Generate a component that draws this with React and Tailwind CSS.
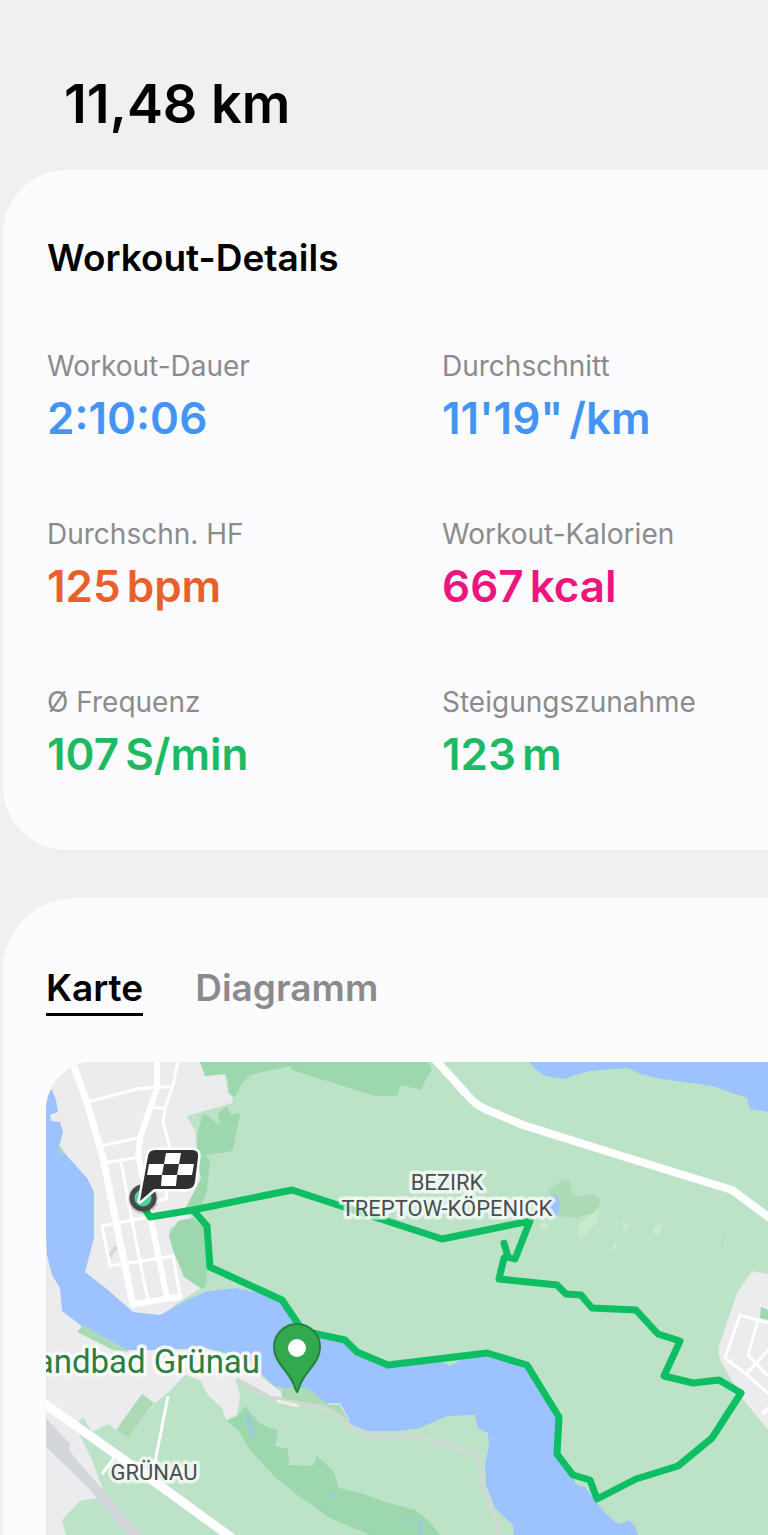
const stats = [
  { label: "Workout-Dauer", value: "2:10:06", color: "text-[#4495f3]" },
  { label: "Durchschnitt", value: "11'19\"", unit: "/km", color: "text-[#4495f3]" },
  { label: "Durchschn. HF", value: "125", unit: "bpm", color: "text-[#ea602d]" },
  { label: "Workout-Kalorien", value: "667", unit: "kcal", color: "text-[#f0147f]" },
  { label: "Ø Frequenz", value: "107", unit: "S/min", color: "text-[#1dba63]" },
  { label: "Steigungszunahme", value: "123", unit: "m", color: "text-[#1dba63]" },
];

function Stat({ label, value, unit, color }) {
  return (
    <div>
      <dt className="text-[28px] leading-10 text-[#8b8b8d]">{label}</dt>
      <dd className={`flex gap-1.5 text-[44px] font-semibold leading-16 ${color}`}>
        <span>{value}</span>
        {unit && <span>{unit}</span>}
      </dd>
    </div>
  );
}

function RouteMap() {
  return (
    <svg
      className="block h-[473px] w-full rounded-tl-[48px]"
      viewBox="46 1062 722 473"
      preserveAspectRatio="xMinYMin slice"
      role="img"
      aria-label="Karte"
    >
      <rect x="46" y="1062" width="722" height="473" fill="#bce3c7" />

      {/* built-up areas */}
      <g fill="#ecebee">
        <path d="M46 1062H200L206 1076L225 1074L228 1094L233 1097L232 1103L187 1116L195 1131L197 1155L201 1180L184 1210L192 1218L170 1228L169 1236L173 1250L185 1277L201 1288L172 1307L160 1320H46Z" />
        <path d="M46 1260L62 1305L126 1345L200 1345L245 1364L281 1392L282 1402L270 1399L235 1378L240 1395L237 1415L226 1420L222 1408L208 1395L200 1380L185 1375L172 1389L155 1403L127 1438L108 1424L92 1432L83 1417L75 1425L92 1460L103 1490L103 1497L80 1501L62 1520L66 1535H46Z" />
        <path d="M768 1274L752 1271L737 1293L719 1346Q717 1358 725 1368L742 1398L768 1430Z" />
      </g>

      {/* woods */}
      <g fill="#9cd7ad">
        <path d="M200 1062L205 1076L225 1074L228 1080L229 1092L234 1098L242 1084L250 1075L290 1066L292 1070L330 1082L375 1096H397L401 1085L421 1090L426 1079L432 1070L428 1062Z" />
        <path d="M198 1131L203 1114L208 1116L219 1125L217 1114L227 1106L231 1115L240 1113L233 1150L228 1152L205 1155L210 1160L207 1190L200 1210H185L190 1200L201 1178L197 1155Z" />
        <path d="M169 1235L178 1221L192 1218L206 1228L208 1265L206 1285L202 1289L184 1277L173 1250Z" />
        <path d="M227 1421L236 1417L245 1406L258 1422L267 1427L278 1430L275 1446L288 1449L289 1465L313 1466L317 1456L334 1472L339 1488L360 1493L385 1502L415 1510L430 1522L440 1535H370L330 1518L300 1497L275 1477L250 1450L238 1430Z" />
        <path d="M761 1307L768 1310V1320L760 1318Z" />
      </g>
      <path d="M213 1113L220 1125L218 1114Z" fill="#bce3c7" />
      <g fill="#abdab4">
        <path d="M142 1394L154 1403L128 1438L116 1430Z" />
        <path d="M548 1190L563 1180L570 1181L572 1193L580 1197L592 1194L601 1199L599 1206L593 1213L577 1218L558 1216Z" />
      </g>

      {/* water */}
      <g fill="#9cc2ff">
        <path d="M46 1090H52L56 1100L58 1112L50 1115L51 1121L60 1122L63 1132L59 1147L87 1178L94 1192V1238L85 1272L108 1290L133 1312L160 1315L185 1301L205 1292L235 1288L265 1294L283 1301L303 1331L345 1340L357 1352L370 1360L388 1365L440 1361L450 1366L462 1359L487 1353L527 1365L557 1415L556 1455L572 1476L577 1485L585 1487L597 1503L605 1513L615 1522L622 1524L629 1520L635 1526L638 1535H514L513 1525L495 1508L486 1485L485 1465L489 1445L488 1433L478 1428L475 1415L447 1416L420 1428L400 1431L367 1431L350 1424L340 1405L325 1403L312 1392L305 1389L285 1388L274 1386L255 1368L240 1356L205 1348L160 1350L126 1350L105 1338L83 1327L62 1311L60 1288L52 1275L47 1255L46 1235Z" />
        <path d="M529 1062L535 1069L545 1076L563 1079L590 1071L628 1068L640 1074L662 1079L712 1086L747 1098L750 1109L768 1112V1062Z" />
        <ellipse cx="554" cy="1206" rx="6" ry="11" />
      </g>
      <path d="M83 1325L77 1332L113 1350L130 1352L108 1340Z" fill="#abdab4" />
      <path d="M60 1146L58 1151L66 1155Z" fill="#abdab4" />
      <path d="M282 1388L308 1388L325 1403L340 1405L350 1423L332 1411L282 1400Z" fill="#abdab4" />
      <path d="M572 1476L577 1485L585 1487L592 1484L588 1480Z" fill="#bce3c7" />
      <g fill="#9cc8e0">
        <path d="M244 1413L250 1417L256 1438L252 1437Z" />
        <path d="M328 1494L336 1493L333 1498Z" />
        <path d="M403 1516L411 1519L408 1523Z" />
        <path d="M419 1520L423 1522L422 1535L418 1533Z" />
      </g>
      <g fill="#c9e9ce">
        <path d="M599 1210L597 1222L580 1241L578 1227L586 1218Z" />
        <path d="M621 1220L631 1226L624 1231Z" />
        <path d="M664 1221L657 1237L651 1230L656 1226Z" />
        <path d="M618 1237L616 1248L609 1252L613 1246Z" />
        <path d="M544 1220L550 1229L538 1229Z" />
      </g>
      <path d="M725 1232L723 1247L721 1241Z" fill="#acdcc4" />

      {/* railway and forest track */}
      <path d="M46 1418L70 1444L69 1450L80 1464L105 1492L141 1535H128L90 1490L70 1470L46 1447Z" fill="#d3d7db" />
      <path d="M109 1257L116 1247" stroke="#d3d7db" strokeWidth="4" />
      <path d="M237 1380L270 1398L300 1404Q325 1405 340 1417Q352 1430 367 1435L395 1437L425 1438L450 1446L473 1453Q480 1460 482 1480Q485 1495 492 1510L500 1535" fill="none" stroke="#cddad2" strokeWidth="5" />
      <path d="M277 1401L299 1406" stroke="#f6ede0" strokeWidth="3" />
      <path d="M329 1404H340L349 1420" fill="none" stroke="#f2f3e8" strokeWidth="1" />

      {/* streets */}
      <g fill="none" stroke="#fff">
        <path d="M432 1056L470 1098Q476 1105 485 1109L523 1125L625 1157L732 1190L775 1222" strokeWidth="8" />
        <path d="M42 1402L100 1443L155 1482L232 1538" strokeWidth="9" />
        <path d="M70 1056L87 1102L103 1158L133 1305" strokeWidth="7" />
        <path d="M157 1060V1088L140 1138L138 1155L148 1205L167 1298" strokeWidth="6" />
        <path d="M131 1305L182 1296" strokeWidth="6" />
        <g strokeWidth="3">
          <path d="M178 1062L173 1085L165 1108L163 1122L170 1148" />
          <path d="M88 1102L137 1089L158 1087H173M153 1107L165 1109" />
          <path d="M101 1146L138 1138M103 1163L141 1157" />
          <path d="M121 1162L131 1215L140 1262L148 1300" />
          <path d="M102 1226L110 1266L173 1256L180 1296M102 1226L148 1217" />
          <path d="M163 1165L167 1200M150 1203L165 1199" />
          <path d="M168 1396L155 1462M114 1458L102 1474" />
          <path d="M768 1323L740 1315L725 1358L746 1374L770 1395M758 1320L748 1355L770 1378M746 1374L770 1348" />
        </g>
        <circle cx="132" cy="1220" r="3" fill="#fff" stroke="none" />
        <circle cx="140" cy="1261" r="3" fill="#fff" stroke="none" />
        <path d="M762 1414L770 1407" strokeWidth="4" />
      </g>

      {/* route */}
      <path
        d="M145 1209L150 1217L193 1210L292 1190L442 1239L530 1221L515 1259L508 1257L504 1243L508 1257L504 1258L499 1279L557 1285L566 1294L581 1295L592 1308L636 1310L658 1334L680 1341L664 1376L693 1383L719 1380L741 1393L712 1438L678 1466L636 1479L597 1499L590 1480L573 1475L557 1454L559 1417L527 1365L487 1353L388 1365L357 1352L345 1340L303 1331L282 1300L210 1267L207 1226L193 1210"
        fill="none"
        stroke="#0dbf62"
        strokeWidth="7"
        strokeLinejoin="round"
        strokeLinecap="round"
      />

      {/* start and finish */}
      <circle cx="143" cy="1199" r="15" fill="#000" opacity="0.15" />
      <circle cx="143" cy="1198" r="11" fill="#4fd394" stroke="#45494a" strokeWidth="5" />
      <path
        d="M155 1150H192Q199 1150 198 1157L195 1182Q194 1189 187 1189H154L140 1201L148 1156Q149 1150 155 1150Z"
        fill="#303030"
        stroke="#fff"
        strokeWidth="5"
        strokeLinejoin="round"
        paintOrder="stroke"
      />
      <g fill="#fff">
        <path d="M166 1153H181L179 1164H164Z" />
        <path d="M149 1164H164L162 1175H147Z" />
        <path d="M179 1164H194L192 1175H177Z" />
        <path d="M162 1175H177L176 1186H161Z" />
      </g>

      {/* place pin */}
      <path
        d="M297 1392L295 1388C291 1372 274 1364 274 1347A23 23 0 0 1 320 1347C320 1364 303 1372 299 1388Z"
        fill="#34a84f"
        stroke="#23823c"
        strokeWidth="2"
        strokeLinejoin="round"
      />
      <circle cx="297" cy="1348" r="9" fill="#fff" />

      <g
        fontFamily="Roboto, sans-serif"
        stroke="#fff"
        strokeOpacity="0.7"
        strokeWidth="7"
        strokeLinejoin="round"
        paintOrder="stroke"
        fill="#4a4e52"
        fontSize="22"
      >
        <text x="447" y="1190" textAnchor="middle">BEZIRK</text>
        <text x="447" y="1216" textAnchor="middle">TREPTOW-KÖPENICK</text>
        <text x="154" y="1480" textAnchor="middle">GRÜNAU</text>
        <text x="260" y="1373" textAnchor="end" fontSize="33" fill="#2b7f41" strokeOpacity="0.85">
          andbad Grünau
        </text>
      </g>
    </svg>
  );
}

export default function App() {
  return (
    <main className="min-h-screen bg-[#f0f0f2] font-['Inter',sans-serif] text-black">
      <h1 className="px-16 pt-16 pb-[26px] text-[54px] font-semibold leading-20">11,48 km</h1>

      <div className="flex flex-col gap-12 pl-[3px]">
        <section className="rounded-l-[64px] bg-[#fcfcfe] pt-16 pb-16 pl-11">
          <h2 className="text-[37px] font-semibold leading-12">Workout-Details</h2>
          <dl className="mt-16 grid grid-cols-[395fr_326fr] gap-y-16">
            {stats.map((stat) => (
              <Stat key={stat.label} {...stat} />
            ))}
          </dl>
        </section>

        <section className="rounded-tl-[72px] bg-[#fcfcfe] pt-16 pl-[43px]">
          <div role="tablist" className="flex gap-[52px] text-[37px] font-semibold leading-[51px]">
            <button type="button" role="tab" aria-selected="true" className="border-b-3 border-black">
              Karte
            </button>
            <button
              type="button"
              role="tab"
              aria-selected="false"
              className="border-b-3 border-transparent text-[#8b8b8d]"
            >
              Diagramm
            </button>
          </div>
          <div className="mt-[46px]">
            <RouteMap />
          </div>
        </section>
      </div>
    </main>
  );
}
